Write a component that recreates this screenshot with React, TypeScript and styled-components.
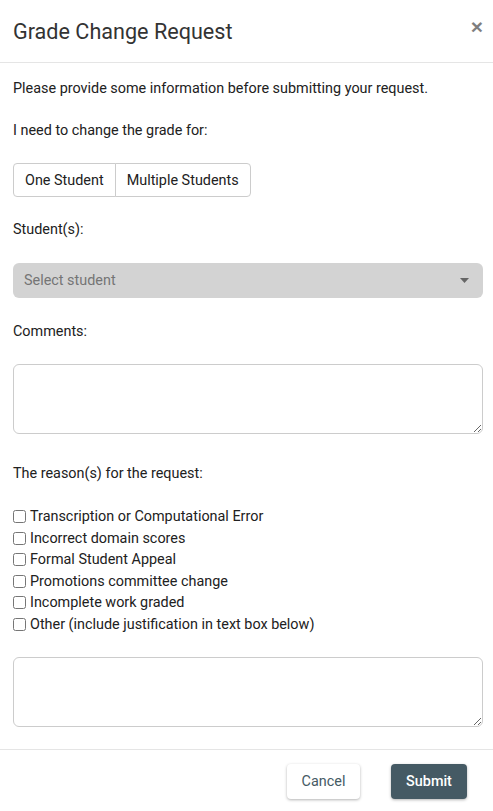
import React from 'react'
import styled, { createGlobalStyle } from 'styled-components'

const GlobalStyle = createGlobalStyle`
  body {
    margin: 0;
    background: #fff;
    font-family: Roboto, "Liberation Sans", Arial, sans-serif;
    color: #212121;
  }
`

const Modal = styled.div`
  width: 493px;
  height: 811px;
  display: flex;
  flex-direction: column;
  background: #fff;
`

const Header = styled.div`
  height: 62px;
  display: flex;
  align-items: center;
  justify-content: space-between;
  padding: 0 10px 0 13px;
  border-bottom: 1px solid #e5e5e5;
  box-sizing: content-box;
`

const Title = styled.h4`
  margin: 2px 0 0;
  font-size: 21.6px;
  font-weight: 400;
  color: #333;
  line-height: 24px;
`

const Close = styled.button`
  border: 0;
  background: transparent;
  padding: 0;
  margin-top: -10px;
  font-family: "Liberation Sans", Arial, sans-serif;
  font-size: 21px;
  font-weight: 700;
  line-height: 1;
  color: #000;
  opacity: 0.5;
  cursor: pointer;
`

const Body = styled.div`
  padding: 14px 10px 22px 13px;
  display: flex;
  flex-direction: column;
`

const Text = styled.p<{ gap?: number }>`
  margin: 0 0 ${({ gap }) => (gap ?? 18)}px;
  font-size: 14.4px;
  line-height: 24px;
`

const ButtonGroup = styled.div`
  display: inline-flex;
  align-self: flex-start;
  margin-bottom: 21px;
`

const GroupButton = styled.button`
  height: 34px;
  padding: 0 11px;
  background: #fff;
  border: 1px solid #ccc;
  font-family: inherit;
  font-size: 14.4px;
  color: #212121;
  cursor: pointer;
  &:first-child {
    border-radius: 4px 0 0 4px;
  }
  & + & {
    margin-left: -1px;
    border-radius: 0 4px 4px 0;
  }
`

const SelectBox = styled.div`
  height: 35px;
  display: flex;
  align-items: center;
  justify-content: space-between;
  padding: 0 14px 0 11px;
  background: #d3d3d3;
  border-radius: 6px;
  font-size: 14.4px;
  color: #757575;
  margin-bottom: 22px;
`

const TextArea = styled.textarea<{ gap?: number }>`
  height: 70px;
  box-sizing: border-box;
  border: 1px solid #ccc;
  border-radius: 6px;
  margin: 0 0 ${({ gap }) => (gap ?? 0)}px;
  padding: 6px 10px;
  font-family: inherit;
  font-size: 14.4px;
  resize: vertical;
`

const CheckList = styled.div`
  display: flex;
  flex-direction: column;
  margin-bottom: 22px;
`

const CheckRow = styled.label`
  display: flex;
  align-items: center;
  height: 21.5px;
  font-size: 14.4px;
  color: #212121;
`

const Check = styled.input`
  width: 13px;
  height: 13px;
  margin: 0 4px 0 0;
`

const Footer = styled.div`
  border-top: 1px solid #e5e5e5;
  display: flex;
  justify-content: flex-end;
  gap: 31px;
  padding: 14px 26px 12px 0;
`

const ActionButton = styled.button<{ primary?: boolean }>`
  height: 35px;
  width: ${({ primary }) => (primary ? 76 : 73)}px;
  padding: 0;
  border: 0;
  border-radius: 4px;
  font-family: inherit;
  font-size: 14.4px;
  font-weight: ${({ primary }) => (primary ? 500 : 400)};
  color: ${({ primary }) => (primary ? '#fff' : '#455a64')};
  background: ${({ primary }) => (primary ? '#455a64' : '#fff')};
  box-shadow: 0 1px 3px rgba(0, 0, 0, 0.3);
  cursor: pointer;
`

const reasons = [
  'Transcription or Computational Error',
  'Incorrect domain scores',
  'Formal Student Appeal',
  'Promotions committee change',
  'Incomplete work graded',
  'Other (include justification in text box below)',
]

export default function App() {
  return (
    <>
      <GlobalStyle />
      <Modal>
        <Header>
          <Title>Grade Change Request</Title>
          <Close aria-label="Close">×</Close>
        </Header>
        <Body>
          <Text>Please provide some information before submitting your request.</Text>
          <Text gap={20}>I need to change the grade for:</Text>
          <ButtonGroup>
            <GroupButton>One Student</GroupButton>
            <GroupButton>Multiple Students</GroupButton>
          </ButtonGroup>
          <Text gap={21}>Student(s):</Text>
          <SelectBox>
            Select student
            <svg width="9" height="5" viewBox="0 0 9 5">
              <path d="M0 0h9L4.5 5z" fill="#666" />
            </svg>
          </SelectBox>
          <Text gap={20}>Comments:</Text>
          <TextArea gap={28} />
          <Text gap={20}>The reason(s) for the request:</Text>
          <CheckList>
            {reasons.map(r => (
              <CheckRow key={r}>
                <Check type="checkbox" />
                {r}
              </CheckRow>
            ))}
          </CheckList>
          <TextArea />
        </Body>
        <Footer>
          <ActionButton>Cancel</ActionButton>
          <ActionButton primary>Submit</ActionButton>
        </Footer>
      </Modal>
    </>
  )
}
